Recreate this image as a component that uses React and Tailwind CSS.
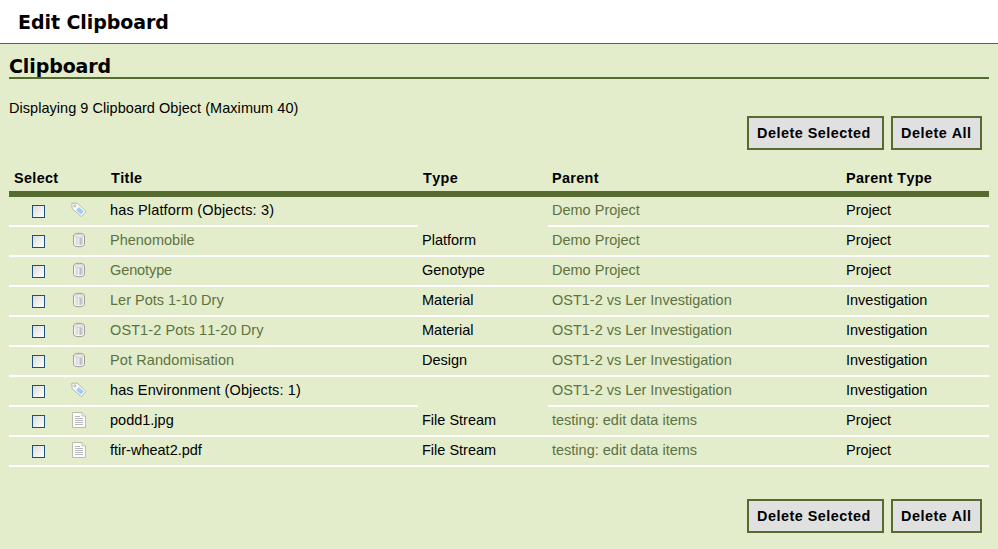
import React from 'react';

const INV = 'OST1-2 vs Ler Investigation';

const rows = [
  { icon: 'tag', title: 'has Platform (Objects: 3)', spacing: 'tracking-[0.15px]', type: '', parent: 'Demo Project', parentType: 'Project' },
  { icon: 'db', title: 'Phenomobile', link: true, type: 'Platform', parent: 'Demo Project', parentType: 'Project' },
  { icon: 'db', title: 'Genotype', spacing: 'tracking-[-0.1px]', link: true, type: 'Genotype', parent: 'Demo Project', parentType: 'Project' },
  { icon: 'db', title: 'Ler Pots 1-10 Dry', link: true, type: 'Material', parent: INV, parentType: 'Investigation' },
  { icon: 'db', title: 'OST1-2 Pots 11-20 Dry', spacing: 'tracking-[0.1px]', link: true, type: 'Material', parent: INV, parentType: 'Investigation' },
  { icon: 'db', title: 'Pot Randomisation', spacing: 'tracking-[0.1px]', link: true, type: 'Design', parent: INV, parentType: 'Investigation' },
  { icon: 'tag', title: 'has Environment (Objects: 1)', spacing: 'tracking-[0.11px]', type: '', parent: INV, parentType: 'Investigation' },
  { icon: 'file', title: 'podd1.jpg', type: 'File Stream', parent: 'testing: edit data items', parentType: 'Project' },
  { icon: 'file', title: 'ftir-wheat2.pdf', type: 'File Stream', parent: 'testing: edit data items', parentType: 'Project' },
];

function TagIcon() {
  return (
    <svg width="16" height="16" viewBox="0 0 16 16" className="block">
      <path d="M.8 1.3L6.2 1.1L15 9.4L10.4 14.6L1.2 6.8Z" fill="#fcfdfb" stroke="#b2b8ab" strokeLinejoin="round" />
      <path d="M8 4.9L12.9 9.4L9.9 12.6L5 8.2Z" fill="#9fcdf3" />
      <circle cx="3.9" cy="3.9" r="1.1" fill="#e3edcc" stroke="#a9aca4" strokeWidth=".8" />
    </svg>
  );
}

function DatabaseIcon() {
  return (
    <svg width="16" height="16" viewBox="0 0 16 16" className="block">
      <defs>
        <linearGradient id="cyl" x1="0" x2="1" y1="0" y2="0">
          <stop offset="0" stopColor="#f4f4f4" />
          <stop offset=".3" stopColor="#d6d6d6" />
          <stop offset=".45" stopColor="#f0f0f0" />
          <stop offset=".65" stopColor="#bcbcbc" />
          <stop offset="1" stopColor="#e2e2e2" />
        </linearGradient>
      </defs>
      <path d="M2.5 3.8C2.5 .4 13.5 .4 13.5 3.8V12.2C13.5 15.6 2.5 15.6 2.5 12.2Z" fill="#fafaf8" stroke="#a09f9b" />
      <path d="M3.6 5Q8 7.2 12.4 5V12.1Q8 14.6 3.6 12.1Z" fill="url(#cyl)" />
      <ellipse cx="8" cy="4" rx="4.4" ry="1.5" fill="#ececec" stroke="#b8b8b6" strokeWidth=".6" />
    </svg>
  );
}

function FileIcon() {
  return (
    <svg width="16" height="16" viewBox="0 0 16 16" className="block">
      <path d="M1.5 .5H11L14.5 4V15.5H1.5Z" fill="#fdfdfc" stroke="#b9bdad" />
      <path d="M11 .5V4H14.5" fill="#f2f2f0" stroke="#b9bdad" strokeWidth=".9" />
      <path d="M4 4.5H9M4 6.5H12M4 8.5H12M4 10.5H12M4 12.5H12" stroke="#b8b7bd" />
    </svg>
  );
}

const icons = { tag: TagIcon, db: DatabaseIcon, file: FileIcon };

function Buttons() {
  const base =
    'h-[34px] shrink-0 border-2 border-[#556b2f] bg-[#e0e0e0] pt-[2px] pl-2 text-left text-[14.4px] font-bold tracking-[0.5px] whitespace-nowrap';
  return (
    <div className="flex justify-end gap-[7px] pr-[7px]">
      <button className={`${base} w-[137px]`}>Delete Selected</button>
      <button className={`${base} w-[91px]`}>Delete All</button>
    </div>
  );
}

const grid = 'grid grid-cols-[53px_44px_312px_130px_294px_147px]';

export default function App() {
  return (
    <div className="h-[549px] w-[998px] overflow-hidden bg-[#e3edcc] font-['Liberation_Sans',Arial,sans-serif] text-[14.5px] text-black [font-kerning:none]">
      <header className="h-11 border-b border-[#556b2f] bg-white pt-[9px] pl-[18px]">
        <h1 className="font-['DejaVu_Sans',Verdana,sans-serif] text-[19px] leading-[26px] font-bold tracking-[-0.07px]">Edit Clipboard</h1>
      </header>
      <main className="px-[9px] pt-[9px]">
        <h2 className="h-[26px] border-b-2 border-[#556b2f] font-['DejaVu_Sans',Verdana,sans-serif] text-[19px] leading-[26px] font-bold tracking-[-0.1px]">
          Clipboard
        </h2>
        <p className="mt-[20px] h-[17px] leading-[19px] tracking-[0.04px]">Displaying 9 Clipboard Object (Maximum 40)</p>
        <Buttons />
        <div className="mt-[15px]">
          <div className={`${grid} h-[32px] border-b-[6px] border-[#556b2f] text-[14.4px] leading-[26px] font-bold tracking-[0.35px]`}>
            <span className="pl-[5px]">Select</span>
            <span />
            <span className="pl-[5px]">Title</span>
            <span className="pl-[5px]">Type</span>
            <span className="pl-[4px]">Parent</span>
            <span className="pl-[4px]">Parent Type</span>
          </div>
          {rows.map((r, i) => {
            const Icon = icons[r.icon];
            const cell = 'h-[30px] border-b-2 border-white pl-[4px] leading-[26px] whitespace-nowrap';
            return (
              <div key={i} className={grid}>
                <div className="h-[30px] border-b-2 border-white pt-[8px] pl-[23px]">
                  <input
                    type="checkbox"
                    aria-label={r.title}
                    className="block size-[13px] appearance-none border border-[#1c5180] bg-linear-to-br from-[#dcdcd7] to-white"
                  />
                </div>
                <div className="h-[30px] border-b-2 border-white pt-[5px] pl-[9px]">
                  <Icon />
                </div>
                <div className={`${cell} ${r.spacing ?? ''} ${r.link ? 'text-[#5d7240]' : ''}`}>{r.title}</div>
                {r.type ? <div className={cell}>{r.type}</div> : <div />}
                <div className={`${cell} text-[#5d7240]`}>{r.parent}</div>
                <div className={cell}>{r.parentType}</div>
              </div>
            );
          })}
        </div>
        <div className="mt-[32px]">
          <Buttons />
        </div>
      </main>
    </div>
  );
}
